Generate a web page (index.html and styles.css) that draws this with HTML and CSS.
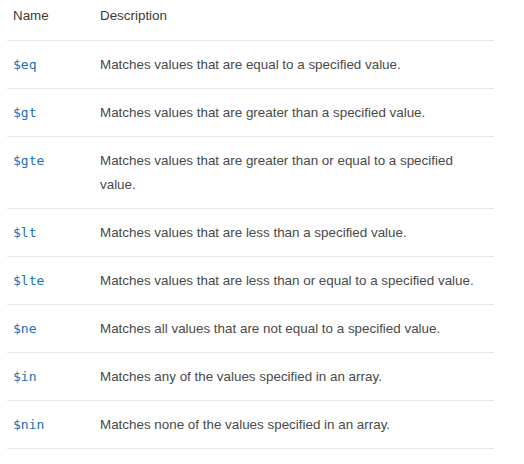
FILE: index.html
```html
<!DOCTYPE html>
<html>
<head>
<meta charset="utf-8">
<link rel="stylesheet" href="styles.css">
</head>
<body>
<table class="ops">
  <thead>
    <tr><th class="c-name">Name</th><th class="c-desc">Description</th></tr>
  </thead>
  <tbody>
    <tr><td class="c-name"><code>$eq</code></td><td class="c-desc">Matches values that are equal to a specified value.</td></tr>
    <tr><td class="c-name"><code>$gt</code></td><td class="c-desc">Matches values that are greater than a specified value.</td></tr>
    <tr><td class="c-name"><code>$gte</code></td><td class="c-desc">Matches values that are greater than or equal to a specified value.</td></tr>
    <tr><td class="c-name"><code>$lt</code></td><td class="c-desc">Matches values that are less than a specified value.</td></tr>
    <tr><td class="c-name"><code>$lte</code></td><td class="c-desc">Matches values that are less than or equal to a specified value.</td></tr>
    <tr><td class="c-name"><code>$ne</code></td><td class="c-desc">Matches all values that are not equal to a specified value.</td></tr>
    <tr><td class="c-name"><code>$in</code></td><td class="c-desc">Matches any of the values specified in an array.</td></tr>
    <tr><td class="c-name"><code>$nin</code></td><td class="c-desc">Matches none of the values specified in an array.</td></tr>
  </tbody>
</table>
</body>
</html>
```
FILE: styles.css
```css
html, body {
  margin: 0;
  background: #ffffff;
}
body {
  padding: 0 30px 0 7px;
  font-family: "Liberation Sans", Arial, sans-serif;
  font-size: 13.4px;
  color: #494949;
}
.ops {
  width: 487px;
  border-collapse: collapse;
}
.ops th {
  text-align: left;
  font-weight: 500;
  color: #3a3a3a;
  height: 40px;
  padding: 0 6px 9px 6px;
  vertical-align: middle;
  box-sizing: border-box;
  border-bottom: 1px solid #e8e8e8;
}
.ops td {
  padding: 12px 6px 11px 6px;
  line-height: 24px;
  vertical-align: top;
  border-bottom: 1px solid #e8e8e8;
}
.c-name {
  width: 75px;
}
.ops code {
  font-family: "DejaVu Sans Mono", monospace;
  font-size: 13px;
  color: #1a6fbd;
}
```
